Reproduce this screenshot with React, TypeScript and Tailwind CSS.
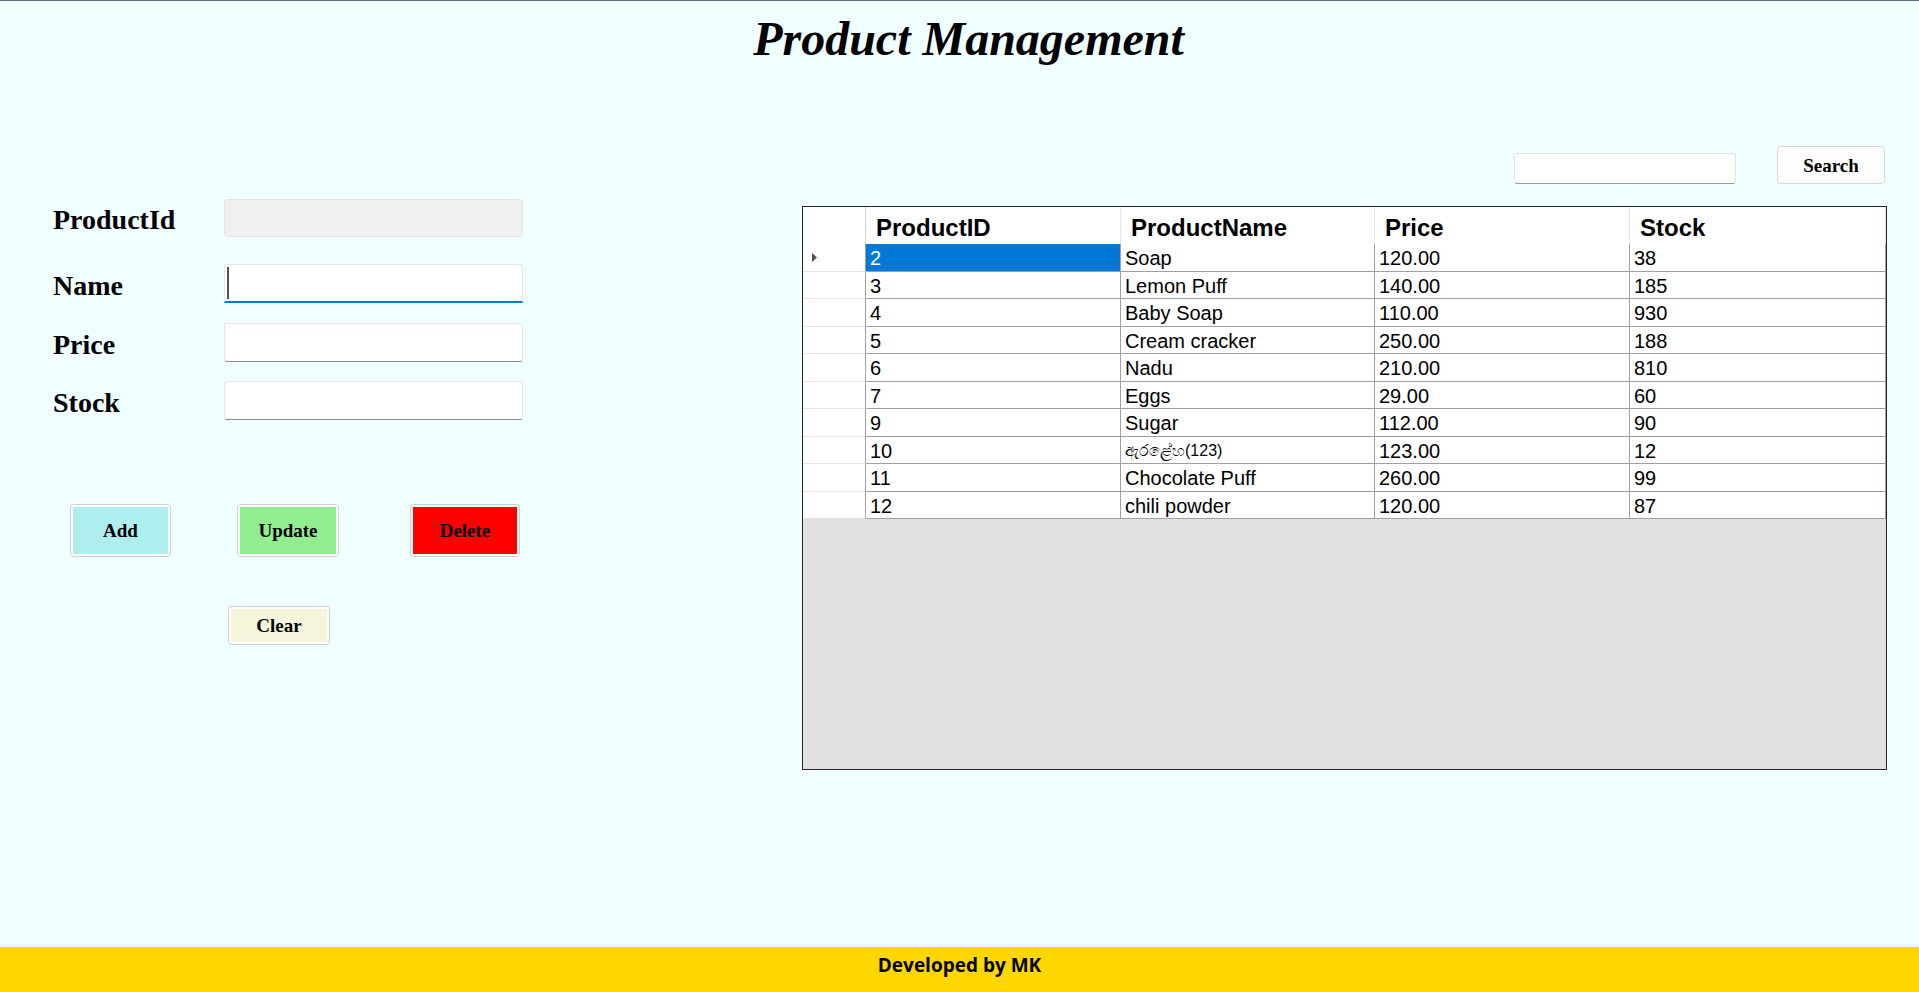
import React from 'react';

const serif = "font-['Liberation_Serif','Times_New_Roman',serif]";
const sans = "font-['Liberation_Sans',Arial,sans-serif]";

const products = [
  ['2', 'Soap', '120.00', '38'],
  ['3', 'Lemon Puff', '140.00', '185'],
  ['4', 'Baby Soap', '110.00', '930'],
  ['5', 'Cream cracker', '250.00', '188'],
  ['6', 'Nadu', '210.00', '810'],
  ['7', 'Eggs', '29.00', '60'],
  ['9', 'Sugar', '112.00', '90'],
  ['10', 'ඇරළේහ(123)', '123.00', '12'],
  ['11', 'Chocolate Puff', '260.00', '99'],
  ['12', 'chili powder', '120.00', '87'],
];

const Label: React.FC<{ text: string }> = ({ text }) => (
  <label className={`${serif} w-[171px] shrink-0 pt-[4px] text-[28px] font-bold leading-[28px] text-black`}>
    {text}
  </label>
);

const ColorButton: React.FC<{ text: string; bg: string; w: string; h: string; extra?: string }> = ({
  text,
  bg,
  w,
  h,
  extra = '',
}) => (
  <button className={`flex ${w} ${h} ${extra} rounded-[4px] border border-[#cdcdcd] bg-white p-[2px]`}>
    <span className={`flex flex-1 items-center justify-center pt-[2px] ${bg} ${serif} text-[19px] font-bold text-black`}>
      {text}
    </span>
  </button>
);

export default function App() {
  return (
    <div className="flex h-screen w-full flex-col overflow-hidden border-t border-[#5c6b7f] bg-[#f0ffff]">
      {/* title */}
      <header className="h-[64px] shrink-0 pl-[18px] pt-[12px] text-center">
        <h1 className={`${serif} text-[48px] font-bold italic leading-[52px] text-black`}>Product Management</h1>
      </header>

      <main className="flex flex-1 items-start">
        {/* form */}
        <section className="w-[802px] shrink-0 pl-[53px] pt-[134px]">
          <div className="flex h-[38px] items-center">
            <Label text="ProductId" />
            <input
              readOnly
              className="h-[38px] w-[299px] rounded-[3px] border border-[#e4e4e4] bg-[#f0f0f0] outline-none"
            />
          </div>
          <div className="mt-[27px] flex h-[39px] items-center">
            <Label text="Name" />
            <div className="relative h-[39px] w-[299px]">
              <input
                readOnly
                className="h-[39px] w-full rounded-t-[3px] border border-[#e4e4e4] border-b-2 border-b-[#0078d7] bg-white outline-none"
              />
              <span className="absolute left-[3px] top-[3px] h-[32px] w-[2px] bg-[#505050]" />
            </div>
          </div>
          <div className="mt-[20px] flex h-[39px] items-center">
            <Label text="Price" />
            <input
              readOnly
              className="h-[39px] w-[299px] rounded-[3px] border border-[#e4e4e4] border-b-[#8c8c8c] bg-white outline-none"
            />
          </div>
          <div className="mt-[19px] flex h-[39px] items-center">
            <Label text=" Stock" />
            <input
              readOnly
              className="h-[39px] w-[299px] rounded-[3px] border border-[#e4e4e4] border-b-[#8c8c8c] bg-white outline-none"
            />
          </div>

          {/* actions */}
          <div className="ml-[17px] mt-[84px] flex">
            <ColorButton text="Add" bg="bg-[#afeeee]" w="w-[101px]" h="h-[53px]" />
            <ColorButton text="Update" bg="bg-[#90ee90]" w="w-[102px]" h="h-[53px]" extra="ml-[66px]" />
            <ColorButton text="Delete" bg="bg-[#ff0000]" w="w-[110px]" h="h-[53px]" extra="ml-[71px]" />
          </div>
          <div className="ml-[175px] mt-[49px] flex">
            <ColorButton text="Clear" bg="bg-[#f5f5dc]" w="w-[102px]" h="h-[39px]" />
          </div>
        </section>

        {/* grid side */}
        <section className="w-[1085px] shrink-0 pt-[81px]">
          <div className="flex h-[38px] items-end justify-end pr-[2px]">
            <input
              readOnly
              className="h-[31px] w-[222px] rounded-[3px] border border-[#e2e2e2] border-b-[#9a9a9a] bg-white outline-none"
            />
            <button
              className={`ml-[41px] h-[38px] w-[108px] rounded-[4px] border border-[#d6d6d6] bg-[#fdfdfd] pt-[2px] ${serif} text-[19px] font-bold text-black`}
            >
              Search
            </button>
          </div>

          <div className="mt-[22px] flex h-[564px] w-full flex-col border border-[#262626] bg-[#e1e1e1]">
            <div className={`grid h-[37px] grid-cols-[63px_255px_254px_255px_256px] bg-white ${sans}`}>
              <div className="border-b border-r border-b-[#b4b4b4] border-r-[#d4d4d4]" />
              {['ProductID', 'ProductName', 'Price', 'Stock'].map((h) => (
                <div
                  key={h}
                  className="flex items-center border-b border-r border-b-[#b4b4b4] border-r-[#e4e4e4] pl-[10px] pt-[3px] text-[24px] font-bold text-black"
                >
                  {h}
                </div>
              ))}
            </div>

            {products.map((p, i) => (
              <div key={p[0]} className={`grid h-[27.5px] grid-cols-[63px_255px_254px_255px_256px] ${sans}`}>
                <div className="flex items-center border-b border-r border-b-[#e3e3e3] border-r-[#a0a0a0] bg-white pl-[9px]">
                  {i === 0 && (
                    <svg width="5" height="9" viewBox="0 0 5 9">
                      <polygon points="0,0 5,4.5 0,9" fill="#505050" />
                    </svg>
                  )}
                </div>
                {p.map((v, j) => (
                  <div
                    key={j}
                    className={`flex items-center overflow-hidden whitespace-nowrap border-b border-r border-[#a0a0a0] pl-[4px] pt-[2px] leading-none ${
                      i === 0 && j === 0 ? 'bg-[#0078d7] text-white' : 'bg-white text-black'
                    } ${j === 1 && i === 7 ? 'text-[16px]' : 'text-[20px]'}`}
                  >
                    {v}
                  </div>
                ))}
              </div>
            ))}
          </div>
        </section>
      </main>

      {/* footer */}
      <footer className="h-[45px] shrink-0 bg-[#ffd700] pt-[9px] text-center font-['Open_Sans',sans-serif] text-[19px] font-bold leading-[19px] text-black">
        Developed by MK
      </footer>
    </div>
  );
}
